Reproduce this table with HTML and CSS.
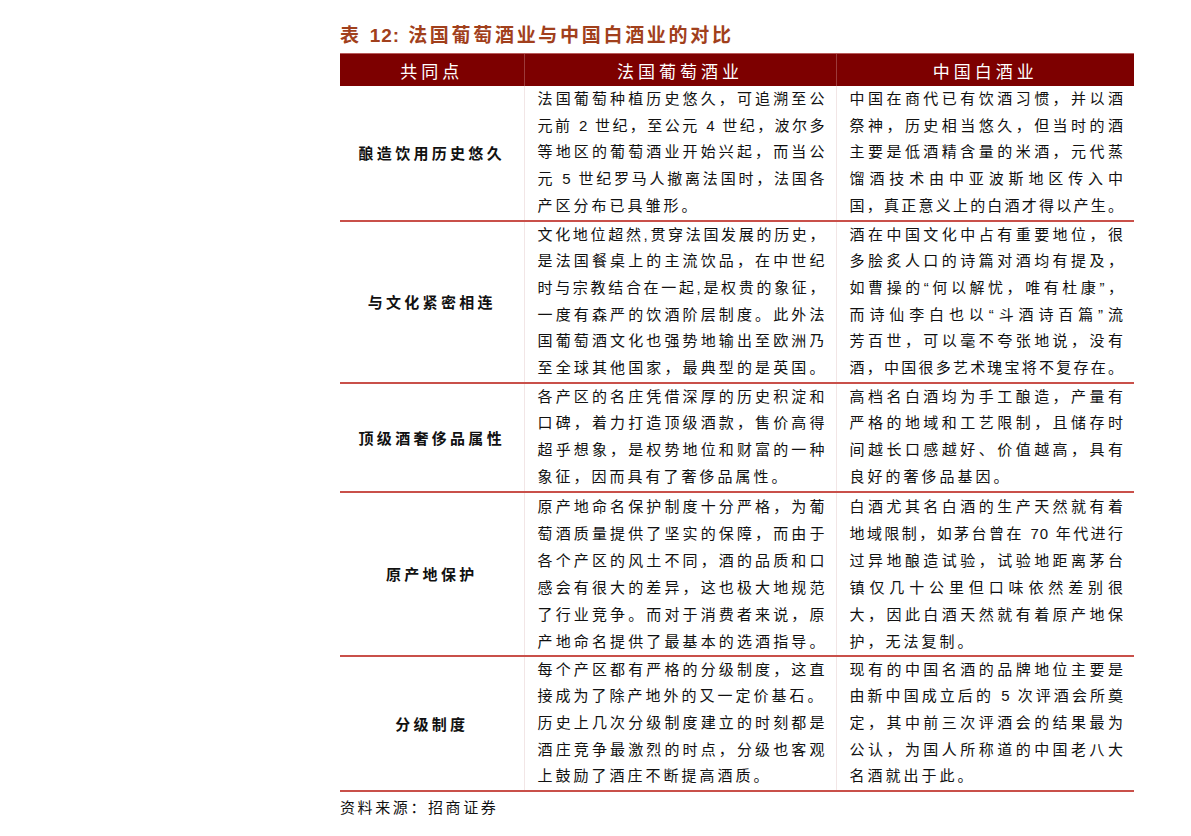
FILE: index.html
```html
<!DOCTYPE html>
<html lang="zh-CN">
<head>
<meta charset="utf-8">
<title>法国葡萄酒业与中国白酒业的对比</title>
<link rel="stylesheet" href="styles.css">
</head>
<body>
<div class="page">
  <h1 class="title">表 <span class="num">12:</span> 法国葡萄酒业与中国白酒业的对比</h1>
  <table class="cmp">
    <colgroup><col class="c1"><col class="c2"><col class="c3"></colgroup>
    <thead>
      <tr><th>共同点</th><th>法国葡萄酒业</th><th>中国白酒业</th></tr>
    </thead>
    <tbody>
      <tr>
        <td class="label">酿造饮用历史悠久</td>
        <td class="txt"><p>法国葡萄种植历史悠久，可追溯至公</p><p>元前 2 世纪，至公元 4 世纪，波尔多</p><p>等地区的葡萄酒业开始兴起，而当公</p><p>元 5 世纪罗马人撤离法国时，法国各</p><p class="last">产区分布已具雏形。</p></td>
        <td class="txt"><p>中国在商代已有饮酒习惯，并以酒</p><p>祭神，历史相当悠久，但当时的酒</p><p>主要是低酒精含量的米酒，元代蒸</p><p>馏酒技术由中亚波斯地区传入中</p><p>国，真正意义上的白酒才得以产生。</p></td>
      </tr>
      <tr>
        <td class="label">与文化紧密相连</td>
        <td class="txt"><p>文化地位超然,贯穿法国发展的历史，</p><p>是法国餐桌上的主流饮品，在中世纪</p><p>时与宗教结合在一起,是权贵的象征，</p><p>一度有森严的饮酒阶层制度。此外法</p><p>国葡萄酒文化也强势地输出至欧洲乃</p><p>至全球其他国家，最典型的是英国。</p></td>
        <td class="txt"><p>酒在中国文化中占有重要地位，很</p><p>多脍炙人口的诗篇对酒均有提及，</p><p>如曹操的“何以解忧，唯有杜康”，</p><p>而诗仙李白也以“斗酒诗百篇”流</p><p>芳百世，可以毫不夸张地说，没有</p><p>酒，中国很多艺术瑰宝将不复存在。</p></td>
      </tr>
      <tr>
        <td class="label">顶级酒奢侈品属性</td>
        <td class="txt"><p>各产区的名庄凭借深厚的历史积淀和</p><p>口碑，着力打造顶级酒款，售价高得</p><p>超乎想象，是权势地位和财富的一种</p><p class="last">象征，因而具有了奢侈品属性。</p></td>
        <td class="txt"><p>高档名白酒均为手工酿造，产量有</p><p>严格的地域和工艺限制，且储存时</p><p>间越长口感越好、价值越高，具有</p><p class="last">良好的奢侈品基因。</p></td>
      </tr>
      <tr class="tall">
        <td class="label">原产地保护</td>
        <td class="txt"><p>原产地命名保护制度十分严格，为葡</p><p>萄酒质量提供了坚实的保障，而由于</p><p>各个产区的风土不同，酒的品质和口</p><p>感会有很大的差异，这也极大地规范</p><p>了行业竞争。而对于消费者来说，原</p><p>产地命名提供了最基本的选酒指导。</p></td>
        <td class="txt"><p>白酒尤其名白酒的生产天然就有着</p><p>地域限制，如茅台曾在 70 年代进行</p><p>过异地酿造试验，试验地距离茅台</p><p>镇仅几十公里但口味依然差别很</p><p>大，因此白酒天然就有着原产地保</p><p class="last">护，无法复制。</p></td>
      </tr>
      <tr>
        <td class="label">分级制度</td>
        <td class="txt"><p>每个产区都有严格的分级制度，这直</p><p class="last">接成为了除产地外的又一定价基石。</p><p>历史上几次分级制度建立的时刻都是</p><p>酒庄竞争最激烈的时点，分级也客观</p><p class="last">上鼓励了酒庄不断提高酒质。</p></td>
        <td class="txt"><p>现有的中国名酒的品牌地位主要是</p><p>由新中国成立后的 5 次评酒会所奠</p><p>定，其中前三次评酒会的结果最为</p><p>公认，为国人所称道的中国老八大</p><p class="last">名酒就出于此。</p></td>
      </tr>
    </tbody>
  </table>
  <p class="source">资料来源：招商证券</p>
</div>
</body>
</html>
```

FILE: styles.css
```css
html, body {
  margin: 0;
  padding: 0;
  background: #ffffff;
}

body {
  font-family: "Liberation Sans", "Noto Sans CJK SC", sans-serif;
  color: #111111;
}

.page {
  width: 794px;
  margin-left: 340px;
  padding-top: 24px;
}

.title {
  margin: 0 0 5px 0;
  font-size: 19px;
  line-height: 24px;
  font-weight: bold;
  color: #a1401c;
  letter-spacing: 2.7px;
  white-space: nowrap;
}

.title .num {
  letter-spacing: 1px;
}

.cmp {
  width: 794px;
  border-collapse: collapse;
  table-layout: fixed;
}

.c1 { width: 184px; }
.c2 { width: 312px; }
.c3 { width: 298px; }

.cmp thead th {
  background: #7d0000;
  color: #ffffff;
  font-weight: normal;
  font-size: 17px;
  letter-spacing: 4px;
  height: 32px;
  padding: 0;
  text-align: center;
  border-top: 1px solid #b85a5a;
  border-left: 1px solid #9c3a3a;
}

.cmp thead th:first-child {
  border-left: none;
}

.cmp tbody td {
  padding: 0;
  vertical-align: middle;
  border-bottom: 2px solid #c9504a;
  border-left: 1px solid #f2e6e6;
}

.cmp tbody td:first-child {
  border-left: none;
}

.label {
  text-align: center;
  font-size: 15px;
  font-weight: bold;
  letter-spacing: 3.3px;
}

.txt {
  font-size: 15px;
  line-height: 26.7px;
  padding: 0 10px 0 13px !important;
}

.txt p {
  margin: 0;
  white-space: nowrap;
  text-align: justify;
  text-align-last: justify;
  letter-spacing: 1px;
}

.txt p.last {
  text-align-last: left;
  letter-spacing: 3px;
}

.tall .txt {
  line-height: 27px;
}

.source {
  margin: 6px 0 0 0;
  font-size: 15px;
  line-height: 20px;
  letter-spacing: 2.6px;
  color: #111111;
}
```
